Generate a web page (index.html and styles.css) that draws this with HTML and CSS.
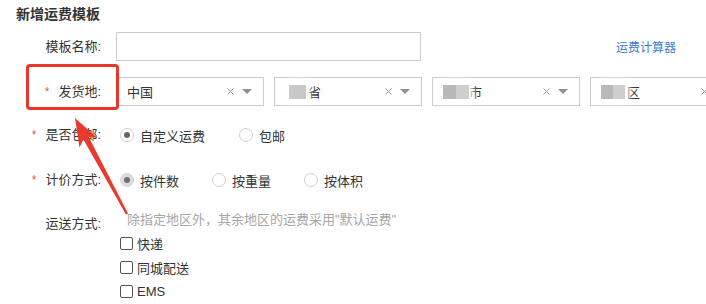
FILE: index.html
```html
<!DOCTYPE html>
<html lang="zh-CN">
<head>
<meta charset="utf-8">
<title>新增运费模板</title>
<link rel="stylesheet" href="styles.css">
</head>
<body>
<div class="page">
  <h1 class="title">新增运费模板</h1>
  <div class="form">
    <div class="row row-name">
      <div class="label">模板名称:</div>
      <div class="field field-name">
        <div class="text-input"></div>
        <a class="link">运费计算器</a>
      </div>
    </div>

    <div class="row row-origin">
      <div class="label"><span class="req">*</span>发货地:</div>
      <div class="field selects">
        <div class="select">
          <span class="val">中国</span>
          <svg class="clear" viewBox="0 0 7 7"><path d="M0.5 0.5L6.5 6.5M6.5 0.5L0.5 6.5"/></svg>
          <span class="caret"></span>
        </div>
        <div class="select">
          <span class="val"><span class="mask mask-short"></span>省</span>
          <svg class="clear" viewBox="0 0 7 7"><path d="M0.5 0.5L6.5 6.5M6.5 0.5L0.5 6.5"/></svg>
          <span class="caret"></span>
        </div>
        <div class="select">
          <span class="val"><span class="mask"></span>市</span>
          <svg class="clear" viewBox="0 0 7 7"><path d="M0.5 0.5L6.5 6.5M6.5 0.5L0.5 6.5"/></svg>
          <span class="caret"></span>
        </div>
        <div class="select">
          <span class="val"><span class="mask mask-two"></span>区</span>
          <svg class="clear" viewBox="0 0 7 7"><path d="M0.5 0.5L6.5 6.5M6.5 0.5L0.5 6.5"/></svg>
          <span class="caret"></span>
        </div>
      </div>
    </div>

    <div class="row row-opt row-free">
      <div class="label"><span class="req">*</span>是否包邮:</div>
      <div class="field options">
        <label class="opt"><span class="radio on"></span>自定义运费</label>
        <label class="opt"><span class="radio"></span>包邮</label>
      </div>
    </div>

    <div class="row row-opt row-calc">
      <div class="label"><span class="req">*</span>计价方式:</div>
      <div class="field options options-calc">
        <label class="opt"><span class="radio on dim"></span>按件数</label>
        <label class="opt"><span class="radio"></span>按重量</label>
        <label class="opt"><span class="radio"></span>按体积</label>
      </div>
    </div>

    <div class="row row-ship">
      <div class="label label-ship">运送方式:</div>
      <div class="field ship">
        <div class="hint">除指定地区外，其余地区的运费采用"默认运费"</div>
        <label class="check"><span class="box"></span>快递</label>
        <label class="check"><span class="box"></span>同城配送</label>
        <label class="check"><span class="box"></span>EMS</label>
      </div>
    </div>
  </div>

  <div class="annot-box"></div>
  <svg class="annot-arrow" viewBox="0 0 706 304">
    <polygon points="75,118 97.1,137.8 88.6,136.8 128.05,213.43 125.95,214.57 83.4,139.6 79.5,147.4"/>
  </svg>
</div>
</body>
</html>
```

FILE: styles.css
```css
html, body {
  margin: 0;
  padding: 0;
}

body {
  width: 706px;
  height: 304px;
  overflow: hidden;
  background: #fff;
  font-family: "Liberation Sans", "Noto Sans CJK SC", sans-serif;
  font-size: 13px;
  color: #333;
}

.page {
  position: relative;
  width: 706px;
  height: 304px;
}

.title {
  margin: 0;
  padding: 6px 0 0 16px;
  font-size: 14px;
  font-weight: bold;
  line-height: 16px;
  color: #333;
}

.form {
  margin-top: 10px;
}

.row {
  display: grid;
  grid-template-columns: 101px minmax(0, 1fr);
  column-gap: 15px;
}

.label {
  text-align: right;
  white-space: nowrap;
  color: #333;
}

.req {
  color: #e5534b;
  margin-right: 9px;
  font-size: 12px;
}

/* row 1 */
.row-name {
  height: 29px;
}
.row-name .label {
  line-height: 29px;
}
.field-name {
  display: flex;
  align-items: center;
}
.text-input {
  width: 305px;
  height: 29px;
  box-sizing: border-box;
  border: 1px solid #ccc;
  background: #fff;
}
.link {
  margin-left: auto;
  margin-right: 30px;
  font-size: 12px;
  color: #3a7dd3;
  cursor: pointer;
}

/* row 2 */
.row-origin {
  margin-top: 16px;
  height: 29px;
}
.row-origin .label {
  line-height: 29px;
}
.selects {
  display: flex;
  gap: 10px;
}
.select {
  flex: 0 0 148px;
  height: 29px;
  box-sizing: border-box;
  border: 1px solid #ccc;
  display: flex;
  align-items: center;
  padding-left: 10px;
  background: #fff;
}
.val {
  flex: 1;
  display: flex;
  align-items: center;
  color: #333;
  white-space: nowrap;
}
.mask {
  display: inline-block;
  width: 26px;
  height: 14px;
  background: linear-gradient(90deg, #bdb8b8 0 50%, #cfcfcf 50% 100%);
  filter: blur(0.6px);
  box-shadow: 0 0 6px 4px rgba(255, 255, 255, 0.9);
}
.mask-short {
  width: 17px;
  margin-left: 4px;
  margin-right: 2px;
  background: #c8c8c8;
}
.mask-two {
  width: 24px;
  margin-right: 2px;
}
.clear {
  width: 7px;
  height: 7px;
  margin-right: 8px;
  stroke: #999;
  stroke-width: 1;
  fill: none;
}
.caret {
  width: 0;
  height: 0;
  border-left: 5px solid transparent;
  border-right: 5px solid transparent;
  border-top: 5px solid #8f8f8f;
  margin-right: 11px;
}

/* radio rows */
.row-opt {
  height: 30px;
}
.row-opt .label {
  line-height: 30px;
}
.row-free {
  margin-top: 14px;
}
.row-calc {
  margin-top: 15px;
}
.options {
  display: flex;
  align-items: center;
  gap: 34px;
  padding-left: 4px;
}
.options-calc {
  gap: 33px;
}
.opt {
  display: flex;
  align-items: center;
  gap: 6px;
  color: #333;
}
.radio {
  width: 14px;
  height: 14px;
  box-sizing: border-box;
  border: 1px solid #cfcfcf;
  border-radius: 50%;
  background: #fff;
  display: flex;
  align-items: center;
  justify-content: center;
}
.radio.on::after {
  content: "";
  width: 6px;
  height: 6px;
  border-radius: 50%;
  background: #666;
}
.radio.dim {
  background: #dcdcdc;
  border-color: #d6d6d6;
}
.radio.dim::after {
  background: #707070;
}

/* shipping */
.row-ship {
  margin-top: 14px;
}
.label-ship {
  padding-top: 4px;
  line-height: 22px;
}
.ship {
  display: flex;
  flex-direction: column;
}
.hint {
  line-height: 22px;
  padding-left: 11px;
  color: #a6a6a6;
  white-space: nowrap;
}
.check {
  height: 24px;
  display: flex;
  align-items: center;
  gap: 4px;
  padding-left: 4px;
  color: #333;
}
.box {
  width: 13px;
  height: 13px;
  box-sizing: border-box;
  border: 1px solid #555;
  border-radius: 2px;
  background: #fff;
}

/* annotations */
.annot-box {
  position: absolute;
  left: 26px;
  top: 64px;
  width: 93px;
  height: 46px;
  box-sizing: border-box;
  border: 3px solid #e8362c;
  border-radius: 4px;
}
.annot-arrow {
  position: absolute;
  left: 0;
  top: 0;
  width: 706px;
  height: 304px;
  pointer-events: none;
}
.annot-arrow polygon {
  fill: #ea3a2e;
}
```
